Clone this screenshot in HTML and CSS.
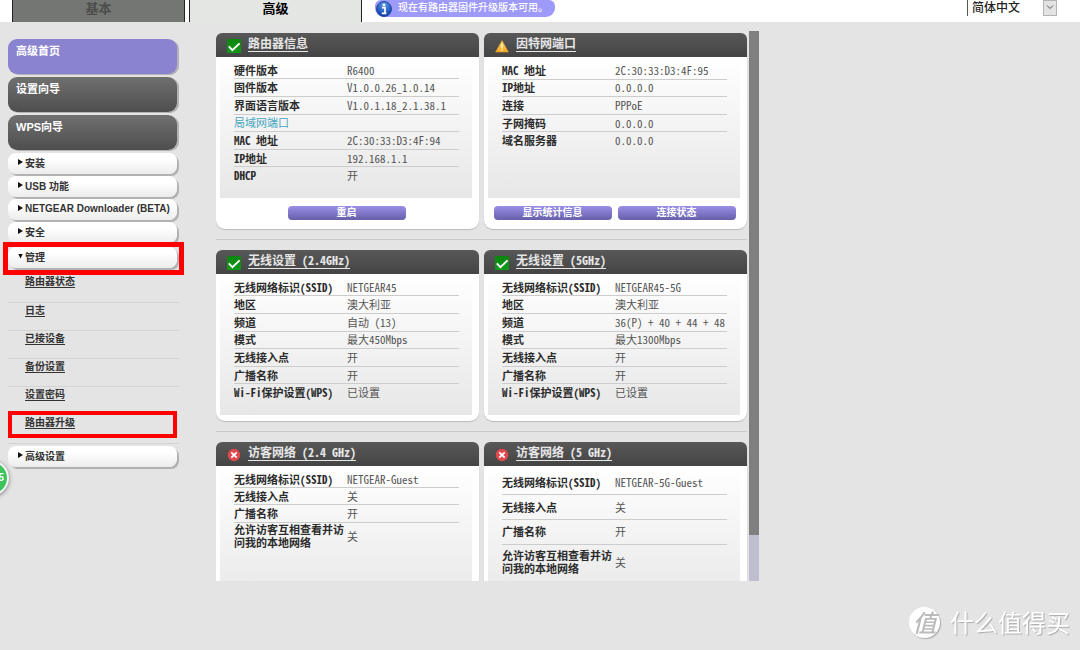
FILE: index.html
```html
<!DOCTYPE html>
<html lang="zh-CN">
<head>
<meta charset="utf-8">
<title>NETGEAR R6400</title>
<link rel="stylesheet" href="styles.css">
</head>
<body>
<svg class="defs" aria-hidden="true">
  <defs>
    <linearGradient id="green" x1="0" y1="0" x2="0" y2="1"><stop offset="0" stop-color="#0c850c"/><stop offset="1" stop-color="#12991a"/></linearGradient>
    <linearGradient id="amber" x1="0" y1="0" x2="0" y2="1"><stop offset="0" stop-color="#ffd873"/><stop offset="1" stop-color="#f0a51c"/></linearGradient>
    <radialGradient id="blue" cx="50%" cy="25%" r="75%"><stop offset="0" stop-color="#5b9bea"/><stop offset="1" stop-color="#0b3aa6"/></radialGradient>
  </defs>
  <symbol id="ok" viewBox="0 0 14 14"><rect width="14" height="14" rx="1" fill="url(#green)"/><path d="M1.800 7.400 5.400 11.200 12.600 4.400" fill="none" stroke="#fff" stroke-width="1.900"/></symbol>
  <symbol id="warn" viewBox="0 0 14 14"><path d="M7 1.500 13.400 13H.6Z" fill="url(#amber)" stroke="#e0a02c" stroke-width=".6" stroke-linejoin="round"/><path d="M7 5v4.600M7 10.600v1.400" stroke="#fff6d8" stroke-width="1.300"/></symbol>
  <symbol id="bad" viewBox="0 0 14 14"><circle cx="7" cy="7" r="6.200" fill="#e0484c"/><path d="M4.300 4.300 9.700 9.700M9.700 4.300 4.300 9.700" stroke="#fff" stroke-width="1.800"/></symbol>
</svg>

<header class="topbar">
  <nav class="tabs">
    <button class="tab" type="button">基本</button>
    <button class="tab active" type="button">高级</button>
  </nav>
  <p class="notice">
    <svg viewBox="0 0 16 16" aria-hidden="true"><circle cx="8" cy="8" r="7.500" fill="url(#blue)" stroke="#234da0"/><circle cx="8" cy="3.800" r="1.400" fill="#fff"/><path d="M6 6.600h3V12M5.800 12.300h4.600" fill="none" stroke="#fff" stroke-width="1.700"/></svg>
    <span>现在有路由器固件升级版本可用。</span>
  </p>
  <div class="language">
    <select aria-label="语言"><option>简体中文</option></select>
    <svg viewBox="0 0 14 16" aria-hidden="true"><rect x=".5" y=".5" width="13" height="15" fill="#e3e3e3" stroke="#b4b4b4"/><path d="M4 5.500 7 8.500 10 5.500" fill="none" stroke="#555"/></svg>
  </div>
</header>

<div class="page">
  <nav class="sidebar">
    <button class="big current" type="button">高级首页</button>
    <button class="big" type="button">设置向导</button>
    <button class="big" type="button">WPS向导</button>
    <button class="group" type="button"><i class="arrow"></i>安装</button>
    <button class="group" type="button"><i class="arrow"></i>USB 功能</button>
    <button class="group" type="button"><i class="arrow"></i>NETGEAR Downloader (BETA)</button>
    <button class="group" type="button"><i class="arrow"></i>安全</button>
    <div class="marked"><button class="group" type="button"><i class="arrow down"></i>管理</button></div>
    <ul class="submenu">
      <li><a href="#">路由器状态</a></li>
      <li><a href="#">日志</a></li>
      <li><a href="#">已接设备</a></li>
      <li><a href="#">备份设置</a></li>
      <li><a href="#">设置密码</a></li>
      <li class="marked"><a href="#">路由器升级</a></li>
    </ul>
    <button class="group" type="button"><i class="arrow"></i>高级设置</button>
  </nav>

  <main class="frame">
    <div class="panels">
      <div class="pair">
        <section class="panel">
          <h2><svg><use href="#ok"/></svg><a href="#">路由器信息</a></h2>
          <div class="body">
            <table>
              <tr><th>硬件版本</th><td>R6400</td></tr>
              <tr><th>固件版本</th><td>V1.0.0.26_1.0.14</td></tr>
              <tr><th>界面语言版本</th><td>V1.0.1.18_2.1.38.1</td></tr>
              <tr><th class="port" colspan="2">局域网端口</th></tr>
              <tr><th>MAC 地址</th><td>2C:30:33:D3:4F:94</td></tr>
              <tr><th>IP地址</th><td>192.168.1.1</td></tr>
              <tr><th>DHCP</th><td>开</td></tr>
            </table>
          </div>
          <div class="actions"><button type="button">重启</button></div>
        </section>
        <section class="panel">
          <h2><svg><use href="#warn"/></svg><a href="#">因特网端口</a></h2>
          <div class="body">
            <table class="five">
              <tr><th>MAC 地址</th><td>2C:30:33:D3:4F:95</td></tr>
              <tr><th>IP地址</th><td>0.0.0.0</td></tr>
              <tr><th>连接</th><td>PPPoE</td></tr>
              <tr><th>子网掩码</th><td>0.0.0.0</td></tr>
              <tr><th>域名服务器</th><td>0.0.0.0</td></tr>
            </table>
          </div>
          <div class="actions"><button type="button">显示统计信息</button><button type="button">连接状态</button></div>
        </section>
      </div>
      <div class="pair">
        <section class="panel">
          <h2><svg><use href="#ok"/></svg><a href="#">无线设置 (2.4GHz)</a></h2>
          <div class="body">
            <table>
              <tr><th>无线网络标识(SSID)</th><td>NETGEAR45</td></tr>
              <tr><th>地区</th><td>澳大利亚</td></tr>
              <tr><th>频道</th><td>自动 (13)</td></tr>
              <tr><th>模式</th><td>最大450Mbps</td></tr>
              <tr><th>无线接入点</th><td>开</td></tr>
              <tr><th>广播名称</th><td>开</td></tr>
              <tr><th>Wi-Fi保护设置(WPS)</th><td>已设置</td></tr>
            </table>
          </div>
        </section>
        <section class="panel">
          <h2><svg><use href="#ok"/></svg><a href="#">无线设置 (5GHz)</a></h2>
          <div class="body">
            <table>
              <tr><th>无线网络标识(SSID)</th><td>NETGEAR45-5G</td></tr>
              <tr><th>地区</th><td>澳大利亚</td></tr>
              <tr><th>频道</th><td>36(P) + 40 + 44 + 48</td></tr>
              <tr><th>模式</th><td>最大1300Mbps</td></tr>
              <tr><th>无线接入点</th><td>开</td></tr>
              <tr><th>广播名称</th><td>开</td></tr>
              <tr><th>Wi-Fi保护设置(WPS)</th><td>已设置</td></tr>
            </table>
          </div>
        </section>
      </div>
      <div class="pair">
        <section class="panel">
          <h2><svg><use href="#bad"/></svg><a href="#">访客网络 (2.4 GHz)</a></h2>
          <div class="body">
            <table class="guest">
              <tr><th>无线网络标识(SSID)</th><td>NETGEAR-Guest</td></tr>
              <tr><th>无线接入点</th><td>关</td></tr>
              <tr><th>广播名称</th><td>开</td></tr>
              <tr><th>允许访客互相查看并访问我的本地网络</th><td>关</td></tr>
            </table>
          </div>
        </section>
        <section class="panel">
          <h2><svg><use href="#bad"/></svg><a href="#">访客网络 (5 GHz)</a></h2>
          <div class="body">
            <table class="guest roomy">
              <tr><th>无线网络标识(SSID)</th><td>NETGEAR-5G-Guest</td></tr>
              <tr><th>无线接入点</th><td>关</td></tr>
              <tr><th>广播名称</th><td>开</td></tr>
              <tr><th>允许访客互相查看并访问我的本地网络</th><td>关</td></tr>
            </table>
          </div>
        </section>
      </div>
    </div>
    <div class="scroll"><div class="thumb"></div></div>
  </main>
</div>

<div class="bubble">5</div>
<div class="watermark"><span class="seal">值</span><span>什么值得买</span></div>
</body>
</html>
```

FILE: styles.css
```css
* { box-sizing: border-box; }

body {
  margin: 0;
  height: 100vh;
  display: flex;
  flex-direction: column;
  overflow: hidden;
  background: #e4e4e4;
  font-family: "Liberation Sans", "Noto Sans CJK SC", sans-serif;
  font-size: 11px;
  color: #333;
}

button { font: inherit; border: 0; padding: 0; cursor: pointer; }

.defs { position: absolute; width: 0; height: 0; }

/* top bar */
.topbar {
  flex: none;
  display: flex;
  align-items: flex-start;
  height: 22px;
  padding: 0 23px 0 12px;
  background: #fff;
}
.tabs { display: flex; gap: 4px; }
.tab {
  width: 173px;
  height: 22px;
  padding-bottom: 4px;
  background: #747673;
  border: solid #222;
  border-width: 0 1px;
  color: #4c4c4c;
  font-size: 13px;
  font-weight: bold;
  line-height: 18px;
}
.tab.active { background: #e4e6e3; color: #000; }
.notice {
  display: flex;
  align-items: center;
  gap: 6px;
  width: 180px;
  height: 17px;
  margin: 0 auto 0 13px;
  padding-left: 1px;
  border-radius: 6px 6px 9px 9px;
  background: #9d9afb;
  color: #fff;
  font-size: 10px;
  font-weight: 500;
  line-height: 16px;
  white-space: nowrap;
}
.notice svg { width: 16px; height: 16px; }
.notice span { padding-bottom: 2px; }
.language {
  display: flex;
  width: 90px;
  height: 16px;
  border-left: 1px solid #555;
}
.language select {
  flex: 1;
  min-width: 0;
  padding: 0 0 0 4px;
  border: 0;
  background: #fff;
  appearance: none;
  color: #222;
  font: 500 12px/15px "Liberation Sans", "Noto Sans CJK SC", sans-serif;
}
.language svg { width: 14px; height: 16px; }

.page {
  flex: 1;
  min-height: 0;
  display: flex;
  gap: 37px;
  padding: 9px 0 69px 8px;
}

/* sidebar */
.sidebar {
  flex: none;
  display: flex;
  flex-direction: column;
  width: 171px;
  padding-top: 8px;
}
.big {
  flex: none;
  width: 169px;
  height: 35px;
  margin-bottom: 3px;
  padding: 0 8px 14px;
  border-radius: 9px;
  background: linear-gradient(#707070, #4e4e4e);
  box-shadow: 2px 1px 0 #b3b1b5;
  color: #fff;
  font-weight: bold;
  text-align: left;
}
.big.current { background: #8a83cf; }
.group {
  flex: none;
  display: flex;
  align-items: center;
  justify-content: flex-start;
  gap: 2px;
  width: 169px;
  height: 21px;
  margin-bottom: 2px;
  padding: 0 0 3px 10px;
  border-radius: 8px;
  background: linear-gradient(#fff 30%, #ececec);
  box-shadow: 2px 2px 0 #b2b2b2;
  color: #333;
  font-size: 10px;
  font-weight: bold;
  white-space: nowrap;
}
.arrow {
  flex: none;
  width: 5px;
  height: 6px;
  background: #111;
  clip-path: polygon(0 0, 100% 50%, 0 100%);
}
.arrow.down { height: 5px; clip-path: polygon(0 0, 100% 0, 50% 100%); }
.marked { outline: 5px solid #f00; }
.sidebar > .marked { margin: 2px 0 0; height: 23px; }
.submenu {
  margin: 0 0 2px;
  padding: 0 0 9px;
  border-bottom: 1px solid #d3d3d3;
  list-style: none;
}
.submenu li {
  height: 28px;
  padding: 0 17px;
  border-bottom: 1px solid #d3d3d3;
  line-height: 14px;
}
.submenu li:first-child { height: 33px; padding-top: 4px; }
.submenu a { color: #333; font-size: 10px; font-weight: bold; text-decoration: underline; text-underline-offset: 2px; }
.submenu .marked { width: 161px; height: 19px; margin-left: 4px; padding: 0 13px; outline-width: 4px; border: 0; }

/* status panels */
.frame {
  display: flex;
  gap: 2px;
  width: 543px;
  overflow: hidden;
}
.panels { flex: 1; padding-top: 2px; }
.pair {
  display: grid;
  grid-template-columns: 1fr 1fr;
  gap: 5px;
  padding-bottom: 10px;
  margin-bottom: 10px;
  border-bottom: 1px solid #c9c9c9;
}
.panel {
  padding-bottom: 6px;
  border-radius: 6px 6px 9px 9px;
  background: #fff;
  box-shadow: 0 1px 1px #bbb;
}
.panel h2 {
  display: flex;
  align-items: center;
  gap: 7px;
  height: 24px;
  margin: 0;
  padding-left: 11px;
  border-radius: 6px 6px 0 0;
  background: linear-gradient(#585858, #444);
  font: bold 12px/18px "Noto Sans Mono CJK SC", "Liberation Mono", "Noto Sans CJK SC", monospace;
}
.panel h2 svg { width: 14px; height: 14px; margin-top: 2px; }
.panel h2 a { padding-bottom: 4px; color: #e6e6e6; text-underline-offset: 3px; text-decoration-thickness: 1px; }
.body {
  height: 141px;
  margin: 0 7px 0 4px;
  padding: 5px 13px 0 14px;
  background: linear-gradient(#fff, #e7e7e7);
}
table {
  width: 100%;
  height: 122px;
  border-collapse: collapse;
  table-layout: fixed;
  font: 11px/13px "Noto Sans Mono CJK SC", "Liberation Mono", "Noto Sans CJK SC", monospace;
}
th, td { padding: 0; text-align: left; white-space: nowrap; border-bottom: 1px solid #ccc; }
tr:last-child > * { border-bottom: 0; }
th { width: 113px; color: #2c2c2c; font-weight: bold; }
td { color: #555; }
.port { color: #45a5c0; font-weight: normal; }
.five { height: 87px; }
.guest { height: 79px; }
.guest tr:last-child > * { height: 28px; }
.guest th { white-space: normal; }
.roomy { height: 109px; }
.roomy tr:last-child > * { height: 36px; }
.actions { display: flex; justify-content: center; gap: 6px; padding: 8px 2px 3px 0; }
.actions button {
  width: 118px;
  height: 14px;
  border-radius: 4px;
  background: linear-gradient(#9a8fe8, #6660a8);
  color: #fff;
  font-size: 10px;
  font-weight: bold;
  line-height: 14px;
}
.scroll { width: 10px; background: #bfbdd0; }
.thumb { height: 91.6%; background: #7f7f7f; }

/* floating marks */
.bubble {
  position: fixed;
  left: -27px;
  top: 460px;
  width: 36px;
  height: 36px;
  padding-right: 3px;
  border: 2px solid #f4f4f4;
  border-radius: 50%;
  background: #3fc35b;
  box-shadow: 0 1px 4px #777;
  color: #fff;
  font-size: 10px;
  font-weight: bold;
  line-height: 32px;
  text-align: right;
}
.watermark {
  position: fixed;
  right: 10px;
  bottom: 12px;
  display: flex;
  align-items: center;
  gap: 10px;
  color: #fff;
  font: 24px/32px "Noto Sans CJK SC", sans-serif;
  text-shadow: 1px 1px 1px #aaa;
}
.seal {
  width: 31px;
  height: 31px;
  border-radius: 50%;
  background: #fff;
  box-shadow: 1px 1px 1px #aaa;
  color: #bbb;
  font-style: italic;
  font-weight: 500;
  line-height: 29px;
  text-align: center;
  text-shadow: none;
}
```
